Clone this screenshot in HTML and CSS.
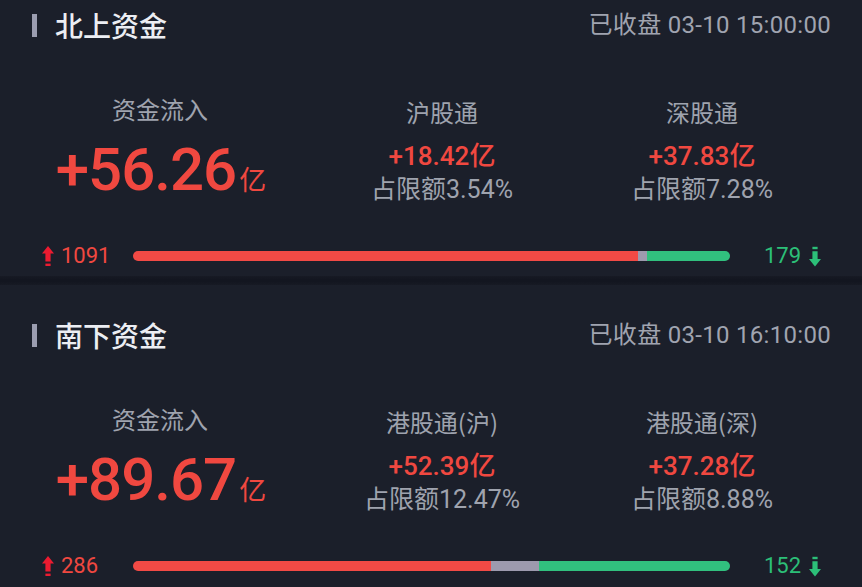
FILE: index.html
```html
<!DOCTYPE html>
<html lang="zh-CN">
<head>
<meta charset="utf-8">
<title>资金流向</title>
<link rel="stylesheet" href="styles.css">
</head>
<body>
<div class="page">
  <section class="panel panel-first">
    <div class="head">
      <div class="head-title"><span class="mark"></span><span class="title">北上资金</span></div>
      <div class="stamp">已收盘 03-10 15:00:00</div>
    </div>
    <div class="grid">
      <div class="col col-main">
        <div class="label">资金流入</div>
        <div class="big">+56.26<span class="unit">亿</span></div>
      </div>
      <div class="col col-sub">
        <div class="label">沪股通</div>
        <div class="amount">+18.42亿</div>
        <div class="limit">占限额3.54%</div>
      </div>
      <div class="col col-sub">
        <div class="label">深股通</div>
        <div class="amount">+37.83亿</div>
        <div class="limit">占限额7.28%</div>
      </div>
    </div>
    <div class="bar-row">
      <div class="cnt cnt-up">
        <svg class="arr" width="12" height="21" viewBox="0 0 12 21"><path d="M6 0 L12 7.5 L8.6 7.5 L8.6 15.5 L3.4 15.5 L3.4 7.5 L0 7.5 Z" fill="#ec1b30"/><rect x="3.4" y="17.6" width="5.2" height="2.4" fill="#ec1b30"/></svg>
        <span>1091</span>
      </div>
      <div class="bar">
        <div class="seg seg-up" style="flex-grow:1091"></div>
        <div class="seg seg-flat" style="flex-grow:20"></div>
        <div class="seg seg-down" style="flex-grow:179"></div>
      </div>
      <div class="cnt cnt-down">
        <span>179</span>
        <svg class="arr" width="12" height="21" viewBox="0 0 12 21"><rect x="3.4" y="0.8" width="5.2" height="2.4" fill="#2cbf78"/><path d="M3.4 5.2 L8.6 5.2 L8.6 13 L12 13 L6 20.6 L0 13 L3.4 13 Z" fill="#2cbf78"/></svg>
      </div>
    </div>
  </section>
  <div class="sep"></div>
  <section class="panel">
    <div class="head">
      <div class="head-title"><span class="mark"></span><span class="title">南下资金</span></div>
      <div class="stamp">已收盘 03-10 16:10:00</div>
    </div>
    <div class="grid">
      <div class="col col-main">
        <div class="label">资金流入</div>
        <div class="big">+89.67<span class="unit">亿</span></div>
      </div>
      <div class="col col-sub">
        <div class="label">港股通(沪)</div>
        <div class="amount">+52.39亿</div>
        <div class="limit">占限额12.47%</div>
      </div>
      <div class="col col-sub">
        <div class="label">港股通(深)</div>
        <div class="amount">+37.28亿</div>
        <div class="limit">占限额8.88%</div>
      </div>
    </div>
    <div class="bar-row">
      <div class="cnt cnt-up">
        <svg class="arr" width="12" height="21" viewBox="0 0 12 21"><path d="M6 0 L12 7.5 L8.6 7.5 L8.6 15.5 L3.4 15.5 L3.4 7.5 L0 7.5 Z" fill="#ec1b30"/><rect x="3.4" y="17.6" width="5.2" height="2.4" fill="#ec1b30"/></svg>
        <span>286</span>
      </div>
      <div class="bar">
        <div class="seg seg-up" style="flex-grow:286"></div>
        <div class="seg seg-flat" style="flex-grow:38.5"></div>
        <div class="seg seg-down" style="flex-grow:153"></div>
      </div>
      <div class="cnt cnt-down">
        <span>152</span>
        <svg class="arr" width="12" height="21" viewBox="0 0 12 21"><rect x="3.4" y="0.8" width="5.2" height="2.4" fill="#2cbf78"/><path d="M3.4 5.2 L8.6 5.2 L8.6 13 L12 13 L6 20.6 L0 13 L3.4 13 Z" fill="#2cbf78"/></svg>
      </div>
    </div>
  </section>
</div>
</body>
</html>
```

FILE: styles.css
```css
html, body {
  margin: 0;
  padding: 0;
  background: #1b1f2a;
}
body {
  font-family: Roboto, "Noto Sans CJK SC", sans-serif;
  color: #9fa3ae;
  overflow: hidden;
}
.page {
  width: 862px;
}
.panel {
  height: 301px;
  padding-top: 36px;
  box-sizing: border-box;
}
.panel-first {
  height: 276px;
  padding-top: 11px;
}
.sep {
  height: 9px;
  background: linear-gradient(#171a24, #131620 40%, #131620 60%, #171a24);
}
.head {
  display: flex;
  justify-content: space-between;
  align-items: center;
  height: 28px;
  padding: 0 31px 0 32px;
}
.head-title {
  display: flex;
  align-items: center;
}
.mark {
  width: 5px;
  height: 23px;
  background: #9b9db0;
  margin-right: 18px;
}
.title {
  font-family: "Noto Sans CJK SC", sans-serif;
  font-size: 28px;
  font-weight: 500;
  color: #eceef3;
  line-height: 28px;
}
.stamp {
  font-size: 24px;
  color: #a0a4b0;
  line-height: 28px;
  letter-spacing: 0.3px;
}
.grid {
  display: grid;
  grid-template-columns: 320px 244px 276px;
  margin-top: 55px;
  height: 111px;
}
.col {
  display: flex;
  flex-direction: column;
  align-items: center;
}
.label {
  font-family: "Noto Sans CJK SC", sans-serif;
  font-size: 24px;
  line-height: 30px;
  height: 30px;
  color: #9fa3ae;
}
.col-sub {
  padding-top: 3px;
}
.big {
  margin-top: 16px;
  height: 60px;
  font-size: 60px;
  line-height: 60px;
  font-weight: 500;
  color: #f04840;
  letter-spacing: -1px;
  padding-left: 2px;
  white-space: nowrap;
}
.unit {
  font-family: "Noto Sans CJK SC", sans-serif;
  font-size: 27px;
  line-height: 0;
  font-weight: 400;
  letter-spacing: 0;
  margin-left: 3px;
}
.amount {
  margin-top: 14px;
  height: 30px;
  font-size: 26px;
  line-height: 30px;
  font-weight: 500;
  color: #f04840;
}
.limit {
  margin-top: 4px;
  height: 30px;
  font-size: 25px;
  line-height: 30px;
  color: #9fa3ae;
}
.bar-row {
  display: flex;
  align-items: center;
  height: 30px;
  margin-top: 36px;
  padding: 0 42px;
}
.cnt {
  display: flex;
  align-items: center;
  font-size: 22px;
  line-height: 30px;
  height: 30px;
}
.cnt-up {
  width: 91px;
  color: #f04840;
  gap: 7px;
}
.cnt-down {
  width: 90px;
  padding-left: 34px;
  box-sizing: border-box;
  color: #2cbf78;
  gap: 8px;
}
.arr {
  display: block;
  flex: none;
}
.bar {
  display: flex;
  width: 597px;
  height: 10px;
  border-radius: 5px;
  overflow: hidden;
}
.seg {
  flex-basis: 0;
  height: 100%;
}
.seg-up { background: #f24a45; }
.seg-flat { background: #9d9aae; }
.seg-down { background: #31c07e; }
```
